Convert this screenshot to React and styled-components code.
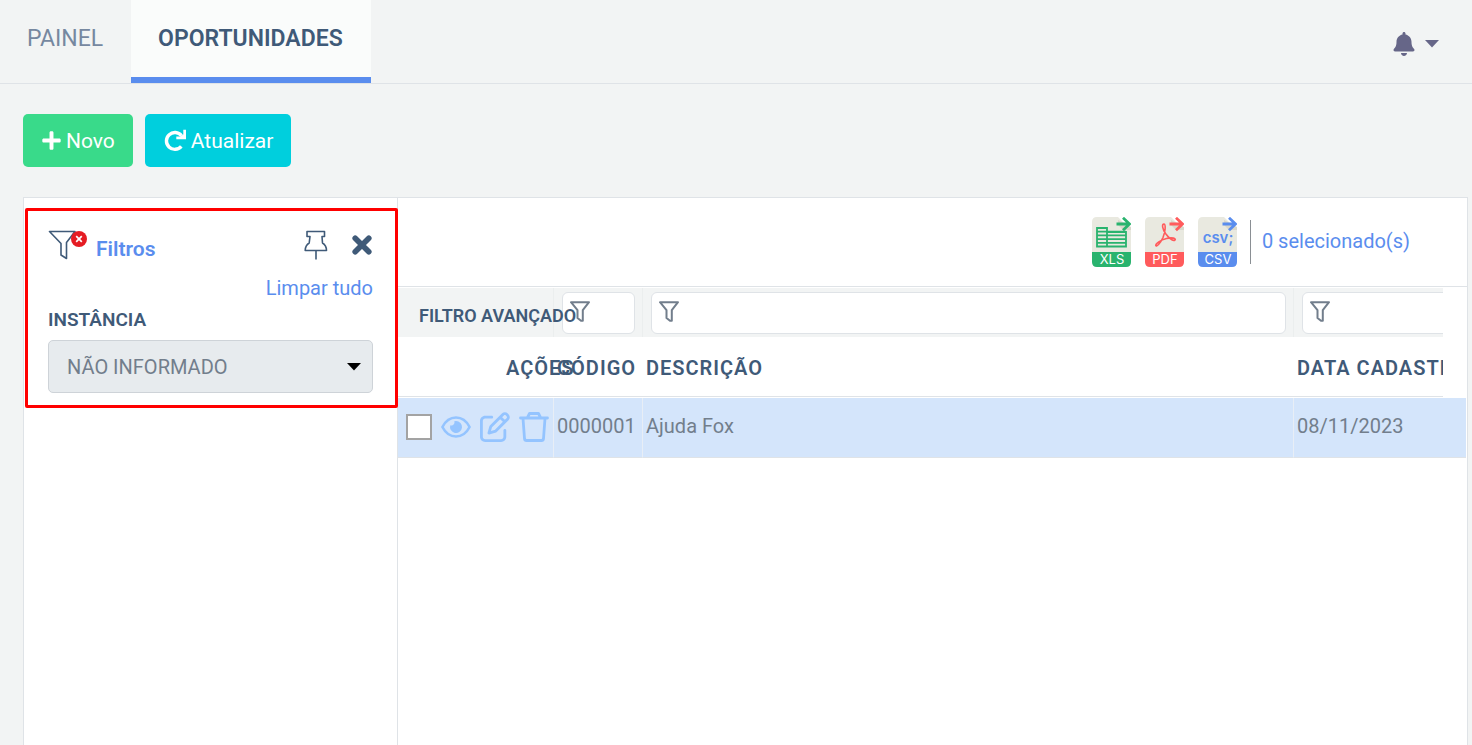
import React from "react";
import styled, { createGlobalStyle } from "styled-components";
import { FaPlus, FaBell } from "react-icons/fa";
import { FaRegPenToSquare } from "react-icons/fa6";

const color = {
  page: "#f2f4f4",
  line: "#dfe3e7",
  navy: "#3f5a78",
  muted: "#727e8c",
  blue: "#5a8dee",
  green: "#39da8a",
  cyan: "#00cfdd",
  soft: "#94c4ff",
  row: "#d4e5fb",
};

const GlobalStyle = createGlobalStyle`
  *, *::before, *::after { box-sizing: border-box; }
  body {
    margin: 0;
    background: ${color.page};
    color: ${color.muted};
    font-family: Roboto, "Liberation Sans", sans-serif;
    font-size: 20px;
    line-height: 24px;
    overflow: hidden;
  }
  button, input, select { font: inherit; color: inherit; }
  svg { display: block; flex: none; }
`;

const Page = styled.div`
  min-height: 100vh;
  display: flex;
  flex-direction: column;
`;

const TopBar = styled.header`
  display: flex;
  justify-content: space-between;
  height: 84px;
  border-bottom: 1px solid ${color.line};
`;

const Tabs = styled.nav`
  display: flex;
`;

const Tab = styled.a`
  display: flex;
  padding: 25px 28px 0 27px;
  font-size: 23px;
  line-height: 28px;
  text-decoration: none;
  color: ${(p) => (p.$active ? color.navy : "#7688a0")};
  font-weight: ${(p) => (p.$active ? 600 : 400)};
  background: ${(p) => (p.$active ? "#fafcfb" : "transparent")};
  border-bottom: 6px solid ${(p) => (p.$active ? color.blue : "transparent")};
`;

const AlertButton = styled.button`
  display: flex;
  align-items: center;
  gap: 9px;
  padding: 5px 33px 0 0;
  border: 0;
  background: none;
  color: #666688;
`;

const Actions = styled.div`
  display: flex;
  gap: 12px;
  padding: 30px 23px;
`;

const ActionButton = styled.button`
  display: flex;
  align-items: center;
  gap: 4px;
  height: 53px;
  padding: 0 18px;
  border: 0;
  border-radius: 5px;
  background: ${(p) => p.$fill};
  color: #fff;
  font-size: 21px;
`;

const Panel = styled.main`
  flex: 1;
  display: flex;
  margin: 0 4px 0 23px;
  background: #fff;
  border: 1px solid ${color.line};
  border-bottom: 0;
`;

const Sidebar = styled.aside`
  flex: none;
  width: 374px;
  border-right: 1px solid ${color.line};
`;

const FilterBox = styled.section`
  margin: 10px -1px 0 1px;
  height: 200px;
  padding: 16px 22px 12px 20px;
  border: 3px solid #ff0000;
  border-radius: 2px;
`;

const FilterHead = styled.div`
  display: flex;
  align-items: center;
  height: 36px;
`;

const FilterTitle = styled.h2`
  flex: 1;
  margin: 8px 0 0 8px;
  font-size: 21px;
  font-weight: 600;
  color: ${color.blue};
`;

const IconButton = styled.button`
  display: flex;
  padding: 0;
  margin-left: ${(p) => p.$gap || 0}px;
  border: 0;
  background: none;
  color: ${(p) => p.$tone || color.navy};
`;

const ClearRow = styled.div`
  display: flex;
  justify-content: flex-end;
  padding-top: 13px;
`;

const ClearLink = styled.a`
  color: ${color.blue};
  text-decoration: none;
`;

const FieldLabel = styled.label`
  display: block;
  padding: 8px 0;
  font-size: 19px;
  font-weight: 600;
  color: ${color.navy};
`;

const SelectWrap = styled.div`
  display: grid;
  align-items: center;
  > * { grid-area: 1 / 1; }
  > svg { justify-self: end; margin-right: 12px; pointer-events: none; }
`;

const Select = styled.select`
  appearance: none;
  width: 100%;
  height: 53px;
  padding: 0 18px;
  border: 1px solid #ced3d8;
  border-radius: 5px;
  background: #e7ebee;
  color: ${color.muted};
  opacity: 1;
`;

const Content = styled.section`
  flex: 1;
  min-width: 0;
`;

const Toolbar = styled.div`
  display: flex;
  justify-content: flex-end;
  align-items: center;
  height: 89px;
  padding-right: 57px;
  border-bottom: 1px solid ${color.line};
`;

const Exports = styled.div`
  display: flex;
  gap: 14px;
  padding-right: 13px;
`;

const Selected = styled.span`
  display: flex;
  align-items: center;
  height: 44px;
  padding: 0 0 2px 11px;
  border-left: 1px solid #8a8f94;
  color: ${color.blue};
`;

const GridClip = styled.div`
  overflow: hidden;
  margin: 1px ${(p) => p.$inset}px 0 0;
`;

const Grid = styled.table`
  width: calc(100% + ${(p) => p.$extra}px);
  table-layout: fixed;
  border-collapse: separate;
  border-spacing: 0;
  th, td { padding: 0; text-align: left; white-space: nowrap; }
`;

const Col = styled.col`
  width: ${(p) => (p.$w ? p.$w + "px" : "auto")};
`;

const FilterCell = styled.td`
  height: 49px;
  background: ${color.page};
  border-right: 1px solid #ebeeee;
`;

const AdvancedLabel = styled.span`
  position: relative;
  z-index: 1;
  display: block;
  padding: 6px 0 0 21px;
  font-size: 18px;
  font-weight: 600;
  color: ${color.navy};
`;

const FilterField = styled.div`
  display: grid;
  margin: 4px 7px 3px 8px;
  > * { grid-area: 1 / 1; }
  > svg { margin: 9px 0 0 8px; }
`;

const FilterInput = styled.input`
  width: 100%;
  height: 42px;
  padding: 0 8px 0 36px;
  border: 1px solid ${color.line};
  border-radius: 6px;
  background: #fff;
`;

const HeadCell = styled.th`
  && { padding: 2px 0 0 ${(p) => p.$pad || 3}px; }
  height: 60px;
  border-bottom: 1px solid ${color.line};
  font-size: 20px;
  font-weight: 600;
  letter-spacing: 1px;
  color: ${color.navy};
`;

const Cell = styled.td`
  && { padding: 0 0 3px 3px; }
  height: 60px;
  background: ${color.row};
  border-right: 1px solid #e8eef6;
  border-bottom: 1px solid ${color.line};
`;

const RowTools = styled.div`
  display: flex;
  align-items: center;
  gap: 9px;
  padding: 2px 0 0 5px;
`;

const Check = styled.input`
  appearance: none;
  width: 26px;
  height: 26px;
  margin: 0;
  border: 2px solid #a3a3a3;
  background: #fff;
`;

const Funnel = () => (
  <svg width="20" height="21" viewBox="0 0 20 21" fill="none" stroke={color.muted} strokeWidth="2" strokeLinejoin="round">
    <path d="M1 1.200H19L12.800 9.200V19.800H11L7.500 17V9.200Z" />
  </svg>
);

const FunnelClear = () => (
  <svg width="40" height="32" viewBox="0 0 40 32">
    <path d="M1.500 2.500H27L18.500 13.500V29.500L13 26V14.500Z" fill="none" stroke={color.navy} strokeWidth="1.600" strokeLinejoin="round" />
    <circle cx="31" cy="10" r="8" fill="#e51c23" />
    <path d="M28.200 7.200L33.800 12.800M33.800 7.200L28.200 12.800" stroke="#fff" strokeWidth="1.700" />
  </svg>
);

const Pin = () => (
  <svg width="24" height="30" viewBox="0 0 24 30" fill="none" stroke={color.navy} strokeWidth="1.600" strokeLinejoin="round">
    <path d="M3 1.500H20.500V6.500H18L18.500 13Q22.500 15.500 22.500 20.500H1.200Q1.200 15.500 5.200 13L6 6.500H3ZM12 20.500V29.500" />
  </svg>
);

const Close = () => (
  <svg width="22" height="22" viewBox="0 0 22 22" fill="none" stroke={color.navy} strokeWidth="5.600" strokeLinecap="round">
    <path d="M4.200 4.200L17.800 17.800M17.800 4.200L4.200 17.800" />
  </svg>
);

const Caret = ({ fill = "currentColor" }) => (
  <svg width="14" height="8" viewBox="0 0 14 8" fill={fill}>
    <path d="M0 0H14L7 7.500Z" />
  </svg>
);

const Refresh = () => (
  <svg width="24" height="24" viewBox="0 0 24 24">
    <path d="M18.500 6.800A8.400 8.400 0 1 0 18.300 17.300" fill="none" stroke="#fff" strokeWidth="3.400" />
    <path d="M20.300 .8H23V10.200H13.300V7.500H17L20.300 5.500Z" fill="#fff" />
  </svg>
);

const Eye = () => (
  <svg width="30" height="22" viewBox="0 0 30 22">
    <path d="M1.400 11C4.500 5 9.500 1.500 15 1.500S25.500 5 28.600 11C25.500 17 20.500 20.500 15 20.500S4.500 17 1.400 11Z" fill="none" stroke="currentColor" strokeWidth="2.600" strokeLinejoin="round" />
    <path d="M15 5A6 6 0 1 1 9.300 9.200A3 3 0 0 0 13.300 5.300Q14 5 15 5Z" fill="currentColor" />
  </svg>
);

const Trash = () => (
  <svg width="30" height="30" viewBox="0 0 30 30" fill="none" stroke="currentColor" strokeWidth="2.800" strokeLinejoin="round" strokeLinecap="round">
    <path d="M1.500 6H28.500M8.500 5.500L10.500 1.500H19.500L21.500 5.500M4 6.500L5.500 26.500Q5.700 28.500 7.500 28.500H22.500Q24.300 28.500 24.500 26.500L26 6.500" />
  </svg>
);

const FileIcon = ({ label, fill, children }) => (
  <svg width="39" height="50" viewBox="0 0 39 50">
    <path d="M5 0H26L39 13V35H0V5Q0 0 5 0Z" fill="#e9e9e0" />
    <path d="M26 3V8L31 13H39V10Z" fill="#d9d7ca" />
    <path d="M0 35H39V45Q39 50 34 50H5Q0 50 0 45Z" fill={fill} />
    {children}
    <path d="M24.500 7H37M31 .8L37.500 7L31 13.200" fill="none" stroke={fill} strokeWidth="2.800" />
    <text x="20" y="47" textAnchor="middle" fontSize="13" fontFamily="Inter" fill="#fff">{label}</text>
  </svg>
);

const XlsIcon = () => (
  <FileIcon label="XLS" fill="#29b36e">
    <path d="M5 11H15V29.500H5ZM15 15H34V29.500H15M5 14.700H34M5 18.400H34M5 22.100H34M5 25.800H34" fill="none" stroke="#29b36e" strokeWidth="1.800" />
  </FileIcon>
);

const PdfIcon = () => (
  <FileIcon label="PDF" fill="#ff5b5c">
    <path d="M19 7C16.500 7 17.500 12 20.500 16.500C23.500 20.500 28 24.500 30 23C31.500 21.500 27 20 21.500 21.500C15.500 23 10.500 26.500 10.800 28.500C11.500 30.500 15.500 26 18 20.500C20.300 15 21 7.500 19 7Z" fill="none" stroke="#ff5b5c" strokeWidth="1.600" />
  </FileIcon>
);

const CsvIcon = () => (
  <FileIcon label="CSV" fill={color.blue}>
    <text x="20" y="26" textAnchor="middle" fontSize="15" fontWeight="600" fontFamily="Inter" fill={color.blue}>csv;</text>
  </FileIcon>
);

const Columns = () => (
  <colgroup>
    <Col $w={156} />
    <Col $w={89} />
    <Col />
    <Col $w={233} />
  </colgroup>
);

const FilterBy = ({ label }) => (
  <FilterCell>
    <FilterField>
      <FilterInput type="text" aria-label={label} />
      <Funnel />
    </FilterField>
  </FilterCell>
);

export default function App() {
  return (
    <Page>
      <GlobalStyle />
      <TopBar>
        <Tabs>
          <Tab href="#painel">PAINEL</Tab>
          <Tab href="#oportunidades" $active>OPORTUNIDADES</Tab>
        </Tabs>
        <AlertButton aria-label="Notificações">
          <FaBell size={24} />
          <Caret />
        </AlertButton>
      </TopBar>
      <Actions>
        <ActionButton $fill={color.green}><FaPlus size={21} />Novo</ActionButton>
        <ActionButton $fill={color.cyan}><Refresh />Atualizar</ActionButton>
      </Actions>
      <Panel>
        <Sidebar>
          <FilterBox>
            <FilterHead>
              <FunnelClear />
              <FilterTitle>Filtros</FilterTitle>
              <IconButton aria-label="Fixar"><Pin /></IconButton>
              <IconButton aria-label="Fechar" $gap={23}><Close /></IconButton>
            </FilterHead>
            <ClearRow><ClearLink href="#limpar">Limpar tudo</ClearLink></ClearRow>
            <FieldLabel htmlFor="instancia">INSTÂNCIA</FieldLabel>
            <SelectWrap>
              <Select id="instancia" defaultValue="none">
                <option value="none">NÃO INFORMADO</option>
              </Select>
              <Caret fill="#000" />
            </SelectWrap>
          </FilterBox>
        </Sidebar>
        <Content>
          <Toolbar>
            <Exports>
              <IconButton aria-label="Exportar XLS"><XlsIcon /></IconButton>
              <IconButton aria-label="Exportar PDF"><PdfIcon /></IconButton>
              <IconButton aria-label="Exportar CSV"><CsvIcon /></IconButton>
            </Exports>
            <Selected>0 selecionado(s)</Selected>
          </Toolbar>
          <GridClip $inset={24}>
            <Grid $extra={84}>
              <Columns />
              <thead>
                <tr>
                  <FilterCell><AdvancedLabel>FILTRO AVANÇADO</AdvancedLabel></FilterCell>
                  <FilterBy label="Filtrar código" />
                  <FilterBy label="Filtrar descrição" />
                  <FilterBy label="Filtrar data de cadastro" />
                </tr>
                <tr>
                  <HeadCell $pad={108}>AÇÕES</HeadCell>
                  <HeadCell>CÓDIGO</HeadCell>
                  <HeadCell>DESCRIÇÃO</HeadCell>
                  <HeadCell>DATA CADASTRO</HeadCell>
                </tr>
              </thead>
            </Grid>
          </GridClip>
          <GridClip $inset={1}>
            <Grid $extra={61}>
              <Columns />
              <tbody>
                <tr>
                  <Cell>
                    <RowTools>
                      <Check type="checkbox" aria-label="Selecionar 0000001" />
                      <IconButton $tone={color.soft} aria-label="Visualizar"><Eye /></IconButton>
                      <IconButton $tone={color.soft} aria-label="Editar"><FaRegPenToSquare size={30} /></IconButton>
                      <IconButton $tone={color.soft} aria-label="Excluir"><Trash /></IconButton>
                    </RowTools>
                  </Cell>
                  <Cell>0000001</Cell>
                  <Cell>Ajuda Fox</Cell>
                  <Cell>08/11/2023</Cell>
                </tr>
              </tbody>
            </Grid>
          </GridClip>
        </Content>
      </Panel>
    </Page>
  );
}
